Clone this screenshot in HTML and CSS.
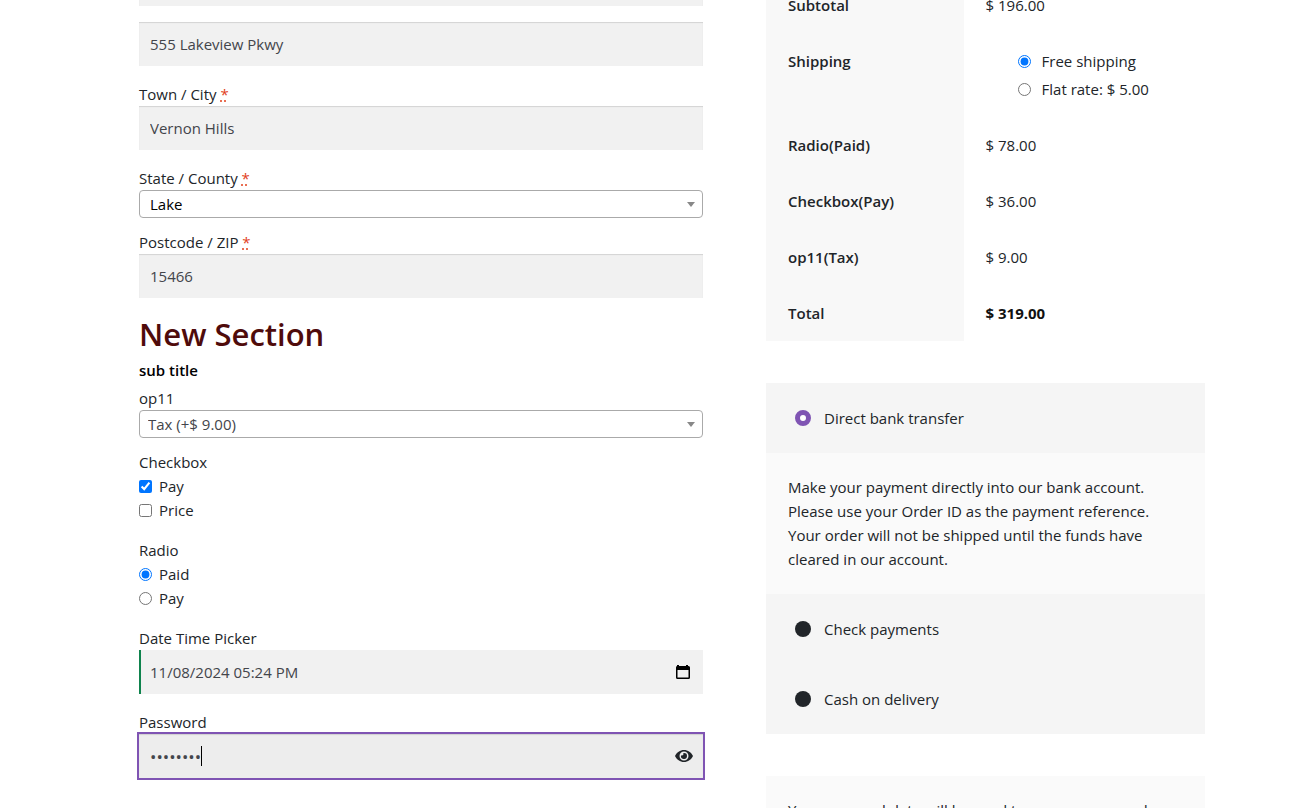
FILE: index.html
```html
<!DOCTYPE html>
<html lang="en">
<head>
<meta charset="utf-8">
<title>Checkout</title>
<link rel="stylesheet" href="styles.css">
</head>
<body>
<main class="checkout">
  <form class="billing">
    <div class="field"><input class="text-input" type="text" aria-label="Street address"></div>
    <div class="field"><input class="text-input" type="text" aria-label="Apartment, suite, unit" value="555 Lakeview Pkwy"></div>
    <div class="field">
      <label for="city">Town / City <abbr class="required" title="required">*</abbr></label>
      <input class="text-input" id="city" type="text" value="Vernon Hills">
    </div>
    <div class="field field-select">
      <label for="state">State / County <abbr class="required" title="required">*</abbr></label>
      <div class="select-wrap"><select class="select" id="state"><option>Lake</option></select></div>
    </div>
    <div class="field">
      <label for="zip">Postcode / ZIP <abbr class="required" title="required">*</abbr></label>
      <input class="text-input" id="zip" type="text" value="15466">
    </div>
    <h2 class="section-title">New Section</h2>
    <p class="section-subtitle">sub title</p>
    <div class="field field-select">
      <label for="op11">op11</label>
      <div class="select-wrap"><select class="select select-muted" id="op11"><option>Tax (+$ 9.00)</option></select></div>
    </div>
    <fieldset class="field choices">
      <legend>Checkbox</legend>
      <label class="choice"><input type="checkbox" checked>Pay</label>
      <label class="choice"><input type="checkbox">Price</label>
    </fieldset>
    <fieldset class="field choices">
      <legend>Radio</legend>
      <label class="choice"><input type="radio" name="radio" checked>Paid</label>
      <label class="choice"><input type="radio" name="radio">Pay</label>
    </fieldset>
    <div class="field">
      <label for="when">Date Time Picker</label>
      <div class="input-wrap">
        <input class="text-input text-input-valid" id="when" type="text" value="11/08/2024 05:24 PM">
        <button class="input-button" type="button" aria-label="Open calendar">
          <svg viewBox="0 0 20 14" width="20" height="14" aria-hidden="true">
            <path fill="#000" fill-rule="evenodd" d="M4 0h2v1h7V0h2v1h.500A1.500 1.500 0 0 1 17 2.500v10a1.500 1.500 0 0 1-1.500 1.500h-11A1.500 1.500 0 0 1 3 12.500v-10A1.500 1.500 0 0 1 4 1.100zM4.500 5v7.500h11V5z"/>
          </svg>
        </button>
      </div>
    </div>
    <div class="field">
      <label for="password">Password</label>
      <div class="input-wrap">
        <input class="text-input text-input-active" id="password" type="password" value="password">
        <span class="caret"></span>
        <button class="input-button" type="button" aria-label="Show password">
          <svg viewBox="0 0 18 12" width="18" height="12" aria-hidden="true">
            <path fill="#212529" fill-rule="evenodd" d="M9 0C5 0 1.700 2.400 0 6c1.700 3.600 5 6 9 6s7.300-2.400 9-6C16.300 2.400 13 0 9 0zm0 1.500a4.500 4.500 0 1 1 0 9 4.500 4.500 0 0 1 0-9z"/>
            <path fill="#212529" d="M9 3a3 3 0 1 1-2.900 2.200A1.500 1.500 0 0 0 8.200 3.100Q8.600 3 9 3z"/>
          </svg>
        </button>
      </div>
    </div>
  </form>

  <section class="order">
    <table class="totals">
      <tbody>
        <tr><th scope="row">Subtotal</th><td>$ 196.00</td></tr>
        <tr><th scope="row">Shipping</th><td>
          <ul class="shipping">
            <li><label><input type="radio" name="shipping" checked>Free shipping</label></li>
            <li><label><input type="radio" name="shipping">Flat rate: $ 5.00</label></li>
          </ul>
        </td></tr>
        <tr><th scope="row">Radio(Paid)</th><td>$ 78.00</td></tr>
        <tr><th scope="row">Checkbox(Pay)</th><td>$ 36.00</td></tr>
        <tr><th scope="row">op11(Tax)</th><td>$ 9.00</td></tr>
        <tr><th scope="row">Total</th><td><strong>$ 319.00</strong></td></tr>
      </tbody>
    </table>
    <div class="payments">
      <label class="method"><input type="radio" name="payment" checked>Direct bank transfer</label>
      <p class="method-info">Make your payment directly into our bank account. Please use your Order ID as the payment reference. Your order will not be shipped until the funds have cleared in our account.</p>
      <label class="method"><input type="radio" name="payment">Check payments</label>
      <label class="method"><input type="radio" name="payment">Cash on delivery</label>
    </div>
    <p class="privacy">Your personal data will be used to process your order, support your experience throughout this website.</p>
  </section>
</main>
</body>
</html>
```
FILE: styles.css
```css
* { box-sizing: border-box; }

body {
  margin: 0;
  height: 100vh;
  overflow: hidden;
  background: #fff;
  color: #212529;
  font: 15px/24px "Segoe UI", "Open Sans", "Noto Sans", sans-serif;
}

.checkout {
  display: grid;
  grid-template-columns: 564fr 439fr;
  gap: 63px;
  padding: 0 95px 0 139px;
}

input, select, button { font: inherit; color: inherit; }

input[type="checkbox"], input[type="radio"] {
  flex: none;
  width: 13px;
  height: 13px;
  margin: 0;
}

/* Billing form, scrolled part-way down */
.billing { margin-top: -38px; }
.field { margin: 0 0 16px; }
.field > label { display: block; }
.field-select { margin-bottom: 12px; }

.required {
  color: #e2401c;
  text-decoration: underline dotted;
}

.text-input {
  display: block;
  width: 100%;
  height: 44px;
  padding: 0 11px;
  border: 0;
  border-radius: 0;
  outline: 0;
  background: #f1f1f1;
  box-shadow: inset 0 1px 1px rgba(0, 0, 0, 0.125);
  color: #43454b;
}

.text-input-valid {
  padding-left: 9px;
  border-left: 2px solid #0f834d;
  box-shadow: none;
}

.select-wrap { position: relative; }

.select-wrap::after {
  content: "";
  position: absolute;
  top: 12px;
  right: 8px;
  border: 4px solid transparent;
  border-top: 5px solid #888;
  border-bottom: 0;
  pointer-events: none;
}

.select {
  display: block;
  width: 100%;
  height: 28px;
  padding: 0 10px;
  border: 1px solid #aaa;
  border-radius: 4px;
  background: #fff;
  color: #000;
  line-height: 24px;
  appearance: none;
}

.select-muted { padding-left: 8px; color: #43454b; }

.section-title {
  margin: 0 0 4px;
  color: #4f0b0b;
  font-size: 31px;
  font-weight: 600;
  line-height: 40px;
}

.section-subtitle {
  margin: 0 0 4px;
  color: #000;
  font-weight: 600;
}

.choices { padding: 0; border: 0; }
.choices legend { padding: 0; }
.choices > .choice { display: flex; align-items: center; gap: 7px; }

.input-wrap { position: relative; }

.text-input-active {
  background: #ededed;
  outline: 2px solid #7f54b3;
  font-size: 17px;
}

.caret {
  position: absolute;
  top: 12px;
  left: 62px;
  width: 1px;
  height: 20px;
  background: #000;
}

.input-button {
  position: absolute;
  top: 0;
  right: 10px;
  display: flex;
  align-items: center;
  height: 100%;
  padding: 0;
  border: 0;
  background: none;
}

/* Order summary */
.totals {
  width: 100%;
  margin: -23px 0 42px;
  border-spacing: 0;
}

.totals th, .totals td {
  padding: 16px 22px;
  text-align: left;
  vertical-align: top;
}

.totals th {
  width: 45%;
  background: #f8f8f8;
  font-weight: 600;
}

.totals strong { color: #111; font-weight: 700; }

.shipping {
  display: flex;
  flex-direction: column;
  gap: 4px;
  margin: 0;
  padding: 0 0 0 32px;
  list-style: none;
}

.shipping label { display: flex; align-items: center; gap: 11px; }

.payments { margin-bottom: 42px; background: #f5f5f5; }

.method {
  display: flex;
  align-items: center;
  gap: 13px;
  min-height: 70px;
  padding: 0 29px;
}

.method input[type="radio"] {
  width: 16px;
  height: 16px;
  border-radius: 50%;
  background: #212529;
  appearance: none;
}

.method input[type="radio"]:checked {
  border: 5px solid #7f54b3;
  background: #fff;
}

.method-info, .privacy {
  margin: 0;
  padding: 22px 22px 23px;
  background: #fafafa;
}
```
